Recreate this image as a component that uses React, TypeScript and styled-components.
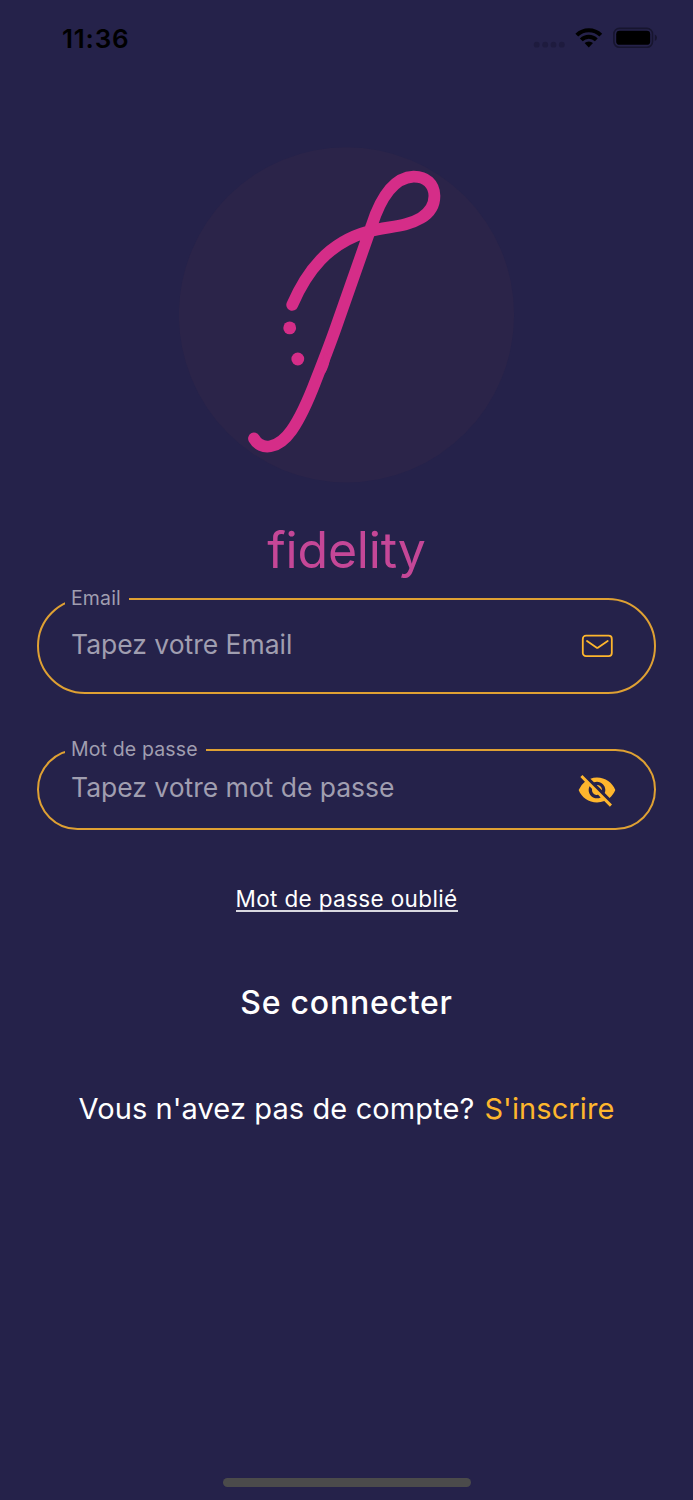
import React from "react";
import styled, { createGlobalStyle } from "styled-components";
import { MdVisibilityOff } from "react-icons/md";

const GlobalStyle = createGlobalStyle`
  * { box-sizing: border-box; }
  body {
    margin: 0;
    background: #25224a;
    font-family: Inter, "Liberation Sans", sans-serif;
  }
`;

const Screen = styled.main`
  display: flex;
  flex-direction: column;
  align-items: center;
  width: 693px;
  height: 1500px;
  background: #25224a;
  overflow: hidden;
`;

const StatusBar = styled.header`
  display: flex;
  justify-content: space-between;
  align-items: center;
  width: 100%;
  height: 76px;
  padding: 0 36px 0 62px;
`;

const Clock = styled.time`
  padding-top: 1px;
  font-size: 26px;
  line-height: 32px;
  font-weight: 600;
  letter-spacing: 0.8px;
  color: #000;
`;

const Logo = styled.svg`
  display: block;
  width: 336px;
  height: 336px;
  margin-top: 71px;
`;

const Title = styled.h1`
  margin: 36px 0 0;
  font-size: 50px;
  line-height: 62px;
  font-weight: 400;
  letter-spacing: -0.2px;
  font-variant-ligatures: none;
  color: #c54797;
`;

const Form = styled.form`
  display: flex;
  flex-direction: column;
  align-items: center;
  width: 619px;
  margin-top: 6px;
`;

const Field = styled.fieldset<{ $height: number; $gap?: number }>`
  width: 100%;
  height: ${(p) => p.$height}px;
  margin: ${(p) => p.$gap ?? 0}px 0 0;
  padding: 0 37px 0 26px;
  border: 2px solid #dfa133;
  border-radius: 48px;
`;

const Label = styled.legend<{ $width: number }>`
  width: ${(p) => p.$width}px;
  height: 24px;
  padding: 0 0 0 6px;
  font-size: 19.5px;
  line-height: 22px;
  letter-spacing: 0.14px;
  white-space: nowrap;
  color: #a09eb0;
`;

const FieldRow = styled.div<{ $height: number }>`
  display: flex;
  justify-content: space-between;
  align-items: center;
  height: ${(p) => p.$height}px;
  padding-left: 6px;
`;

const Hint = styled.span<{ $lift: number }>`
  padding-bottom: ${(p) => p.$lift}px;
  font-size: 26.5px;
  line-height: 34px;
  letter-spacing: -0.02px;
  white-space: nowrap;
  color: #a09eb0;
`;

const IconSlot = styled.span`
  display: flex;
  align-items: center;
  justify-content: center;
  width: 40px;
  height: 40px;
  color: #feb62d;
`;

const ForgotLink = styled.a`
  margin-top: 54px;
  height: 28px;
  border-bottom: 2px solid #d9d9e0;
  font-size: 22.5px;
  line-height: 30px;
  letter-spacing: 0.36px;
  white-space: nowrap;
  color: #fff;
`;

const SubmitButton = styled.button`
  margin: 71px 0 0;
  padding: 0;
  border: 0;
  background: none;
  font-family: inherit;
  font-size: 32px;
  line-height: 40px;
  font-weight: 500;
  letter-spacing: 0.75px;
  color: #fff;
`;

const SignUp = styled.p`
  display: flex;
  gap: 10px;
  margin: 66px 0 0;
  font-size: 29px;
  line-height: 40px;
  letter-spacing: 0.1px;
  white-space: nowrap;
  color: #fff;
`;

const SignUpLink = styled.a`
  color: #feb62d;
`;

const HomeIndicator = styled.div`
  width: 248px;
  height: 9px;
  margin-top: auto;
  margin-bottom: 13px;
  border-radius: 5px;
  background: #4b4b4b;
`;

const StatusIcons = () => (
  <svg width="124" height="24" viewBox="533 26 124 24">
    <g fill="#1e1b3e">
      <circle cx="536.7" cy="44.7" r="2.9" />
      <circle cx="545.2" cy="44.7" r="2.9" />
      <circle cx="553.5" cy="44.7" r="2.9" />
      <circle cx="561.8" cy="44.7" r="2.9" />
    </g>
    <g fill="none" stroke="#000" strokeWidth="4">
      <path d="M576.8 35.2a17 17 0 0 1 24 0" />
      <path d="M581.3 39.9a10.6 10.6 0 0 1 15 0" />
    </g>
    <path d="M584.6 43.1a6 6 0 0 1 8.4 0l-4.2 4.4z" />
    <rect x="613.9" y="28.4" width="38.6" height="18.8" rx="5.5" fill="none" stroke="#17152f" strokeWidth="1.6" />
    <rect x="616.2" y="30.8" width="34" height="14" rx="3.4" />
    <path d="M654.8 34.5q2.2 1 2.2 3.3t-2.2 3.3z" fill="#17152f" />
  </svg>
);

const FidelityLogo = () => (
  <Logo viewBox="179 147 336 336">
    <circle cx="346.5" cy="314.8" r="167.6" fill="#2b2449" />
    <g fill="none" stroke="#d52d88" strokeWidth="11.8" strokeLinecap="round" strokeLinejoin="round">
      <path d="M292.2 304.8C306.5 272 328 242.5 368.5 231.5C389 226 405 227.5 421 218C430 212.5 434.6 205 434.4 195.5C434 184 426 176.5 413.5 176.7C394 177.5 380.5 198 371.5 226L338.5 320C331 342 323.5 361 316 380C308 401 301 417 291.5 430.5C278 449.5 261 451 254 438.5" />
    </g>
    <path d="M325 352L329.9 358.5Q329 367 325 373.2L319 371z" fill="#d52d88" />
    <circle cx="289.7" cy="327.9" r="6.4" fill="#d52d88" />
    <circle cx="297.8" cy="359" r="6.4" fill="#d52d88" />
  </Logo>
);

const MailIcon = () => (
  <svg width="32" height="24" viewBox="0 0 32 24" fill="none" stroke="currentColor" strokeWidth="1.8" strokeLinecap="round" strokeLinejoin="round">
    <rect x="1.8" y="1.7" width="29" height="20.4" rx="3.2" />
    <path d="M6 7L15.4 13.5Q16.3 14.2 17.2 13.5L26.7 7" />
  </svg>
);

const HiddenIcon = styled(MdVisibilityOff)`
  margin-bottom: 1px;
`;

export default function App() {
  return (
    <>
      <GlobalStyle />
      <Screen>
        <StatusBar>
          <Clock>11:36</Clock>
          <StatusIcons />
        </StatusBar>
        <FidelityLogo />
        <Title>fidelity</Title>
        <Form>
          <Field $height={107}>
            <Label $width={64}>Email</Label>
            <FieldRow $height={70}>
              <Hint $lift={5}>Tapez votre Email</Hint>
              <IconSlot>
                <MailIcon />
              </IconSlot>
            </FieldRow>
          </Field>
          <Field $height={92} $gap={44}>
            <Label $width={141}>Mot de passe</Label>
            <FieldRow $height={56}>
              <Hint $lift={6}>Tapez votre mot de passe</Hint>
              <IconSlot>
                <HiddenIcon size={40} />
              </IconSlot>
            </FieldRow>
          </Field>
          <ForgotLink>Mot de passe oublié</ForgotLink>
          <SubmitButton type="button">Se connecter</SubmitButton>
          <SignUp>
            Vous n'avez pas de compte?
            <SignUpLink>S'inscrire</SignUpLink>
          </SignUp>
        </Form>
        <HomeIndicator />
      </Screen>
    </>
  );
}
